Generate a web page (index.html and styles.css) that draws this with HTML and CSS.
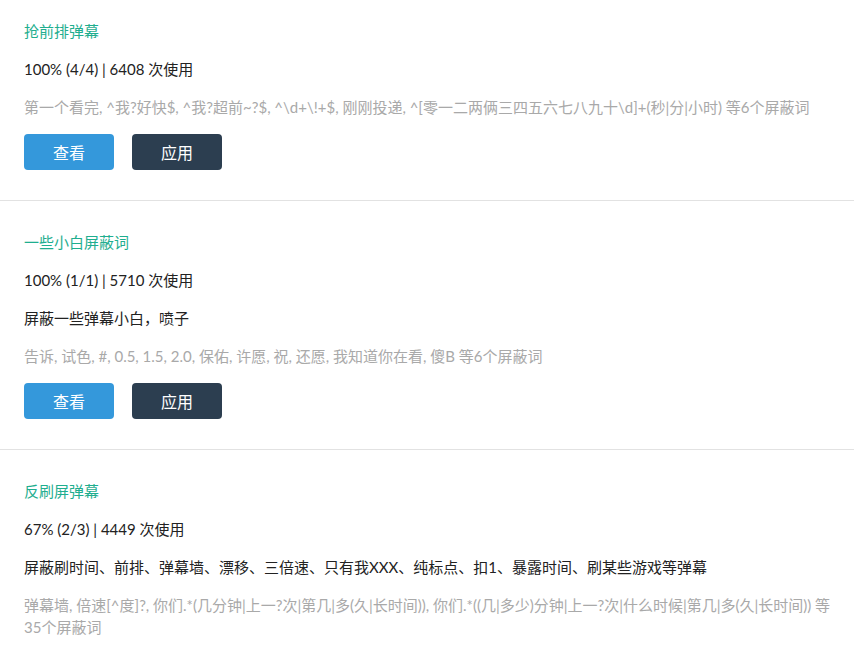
FILE: index.html
```html
<!DOCTYPE html>
<html lang="zh-CN">
<head>
<meta charset="utf-8">
<link rel="stylesheet" href="styles.css">
</head>
<body>
<div class="list">
  <section class="rule first">
    <p class="title">抢前排弹幕</p>
    <p class="stats">100% (4/4) | 6408 次使用</p>
    <p class="words">第一个看完, ^我?好快$, ^我?超前~?$, ^\d+\!+$, 刚刚投递, ^[零一二两俩三四五六七八九十\d]+(秒|分|小时) 等6个屏蔽词</p>
    <div class="actions">
      <button class="btn view">查看</button>
      <button class="btn apply">应用</button>
    </div>
  </section>
  <section class="rule">
    <p class="title">一些小白屏蔽词</p>
    <p class="stats">100% (1/1) | 5710 次使用</p>
    <p class="desc">屏蔽一些弹幕小白，喷子</p>
    <p class="words">告诉, 试色, #, 0.5, 1.5, 2.0, 保佑, 许愿, 祝, 还愿, 我知道你在看, 傻B 等6个屏蔽词</p>
    <div class="actions">
      <button class="btn view">查看</button>
      <button class="btn apply">应用</button>
    </div>
  </section>
  <section class="rule">
    <p class="title">反刷屏弹幕</p>
    <p class="stats">67% (2/3) | 4449 次使用</p>
    <p class="desc">屏蔽刷时间、前排、弹幕墙、漂移、三倍速、只有我XXX、纯标点、扣1、暴露时间、刷某些游戏等弹幕</p>
    <p class="words">弹幕墙, 倍速[^度]?, 你们.*(几分钟|上一?次|第几|多(久|长时间)), 你们.*((几|多少)分钟|上一?次|什么时候|第几|多(久|长时间)) 等 35个屏蔽词</p>
  </section>
</div>
</body>
</html>
```
FILE: styles.css
```css
html, body {
  margin: 0;
  padding: 0;
  background: #fff;
}
body {
  font-family: Lato, "Noto Sans CJK SC", sans-serif;
  font-size: 15px;
  color: #222;
  overflow: hidden;
}
.list {
  width: 854px;
}
.rule {
  padding: 22px 6px 30px 24px;
  border-bottom: 1px solid #e2e2e2;
}
.rule.first {
  padding-top: 12px;
}
.rule p {
  margin: 0;
  padding: 8px 0;
  line-height: 22px;
}
.title {
  color: #1fae8f;
}
.stats, .desc {
  color: #222;
}
.words {
  color: #a9a9a9;
}
.actions {
  display: flex;
  gap: 18px;
  padding-top: 8px;
}
.btn {
  width: 90px;
  height: 36px;
  border: none;
  border-radius: 4px;
  color: #fff;
  font-family: Lato, "Noto Sans CJK SC", sans-serif;
  font-size: 16px;
  padding: 0;
}
.btn.view {
  background: #3498db;
}
.btn.apply {
  background: #2c3e50;
}
```
